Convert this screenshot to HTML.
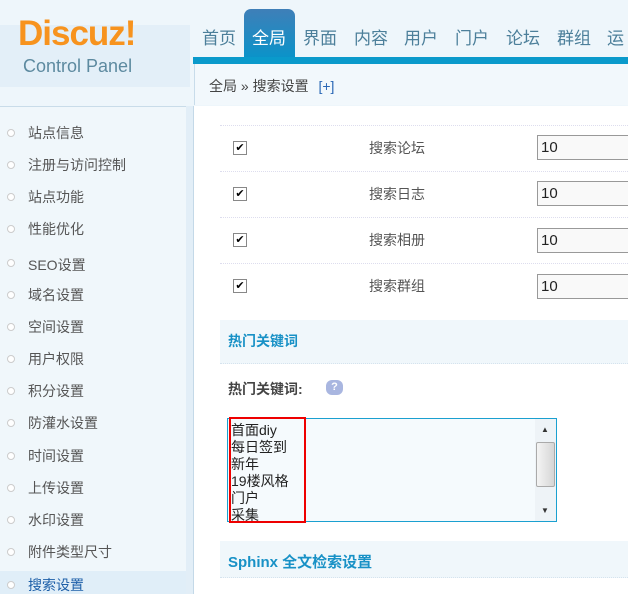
<!DOCTYPE html>
<html><head><meta charset="utf-8"><style>
*{margin:0;padding:0;box-sizing:border-box}
body{width:628px;height:594px;overflow:hidden;position:relative;background:#fff;font-family:"Liberation Sans","Noto Sans CJK SC",sans-serif;font-size:14px;color:#555}
.abs{position:absolute}
#hd{left:0;top:0;width:628px;height:106px;background:#eef6fb}
#logoband{left:0;top:25px;width:190px;height:62px;background:#e3eff8}
#logo1{left:18px;top:14px;font:bold 35px "Liberation Sans",sans-serif;color:#f7931e;letter-spacing:-1px}
#logo2{left:23px;top:56px;font-size:18px;color:#5d8aa0}
.nav{top:24px;font-size:17px;color:#4c7f9a}
#tab{left:244px;top:9px;width:51px;height:49px;background:linear-gradient(#3f7fb8,#0a93c9);border-radius:7px 7px 0 0}
#bar{left:193px;top:57px;width:435px;height:7px;background:#0a9acb}
#crumb{left:194px;top:64px;width:434px;height:41px;background:#f2f8fc;border-left:1px solid #c8dcea}
#side{left:0;top:106px;width:186px;height:488px;background:#f0f7fb;border-top:1px solid #c9dce9}
#sideb{left:186px;top:106px;width:8px;height:488px;background:#e2eef7;border-right:1px solid #c4d9e8}
.mi{left:28px;font-size:14px;color:#555}
.dot{left:7px;width:8px;height:8px;border:1px solid #ccc;border-radius:50%;background:#fff}
.cb{left:233px;width:14px;height:14px;border:1px solid #888;background:#fff;font-size:11px;line-height:12px;text-align:center;color:#000}
.lb{left:369px;font-size:14px;color:#555}
.in{left:537px;width:100px;height:25px;border:1px solid #999;background:#f9f9f9;font-size:15px;padding:3px 0 0 3px;color:#222}
.sep{left:220px;width:408px;border-top:1px dotted #dde}
.sec{left:220px;width:408px;background:#f0f7fb;border-bottom:1px dotted #d5e3ee;color:#1891c6;font-weight:bold;font-size:14px;padding-left:8px}
</style></head><body>
<div id="hd" class="abs"></div>
<div id="logoband" class="abs"></div>
<div id="logo1" class="abs">Discuz!</div>
<div id="logo2" class="abs">Control Panel</div>
<div id="tab" class="abs"></div>
<div class="abs nav" style="left:202px">首页</div>
<div class="abs nav" style="left:252px;color:#fff">全局</div>
<div class="abs nav" style="left:303px">界面</div>
<div class="abs nav" style="left:354px">内容</div>
<div class="abs nav" style="left:404px">用户</div>
<div class="abs nav" style="left:455px">门户</div>
<div class="abs nav" style="left:506px">论坛</div>
<div class="abs nav" style="left:557px">群组</div>
<div class="abs nav" style="left:607px">运</div>
<div id="bar" class="abs"></div>
<div id="crumb" class="abs"><span class="abs" style="left:14px;top:12px;font-size:14px;color:#444">全局 » 搜索设置 <span style="color:#2a67b5;margin-left:6px">[+]</span></span></div>
<div id="side" class="abs"></div>
<div id="sideb" class="abs"></div>
<div class="abs" style="left:0;top:571px;width:186px;height:23px;background:#e0eef8"></div>

<div class="abs dot" style="top:129px"></div><div class="abs mi" style="top:123px">站点信息</div>
<div class="abs dot" style="top:161px"></div><div class="abs mi" style="top:155px">注册与访问控制</div>
<div class="abs dot" style="top:193px"></div><div class="abs mi" style="top:187px">站点功能</div>
<div class="abs dot" style="top:225px"></div><div class="abs mi" style="top:219px">性能优化</div>
<div class="abs dot" style="top:259px"></div><div class="abs mi" style="top:255px">SEO设置</div>
<div class="abs dot" style="top:291px"></div><div class="abs mi" style="top:285px">域名设置</div>
<div class="abs dot" style="top:323px"></div><div class="abs mi" style="top:317px">空间设置</div>
<div class="abs dot" style="top:355px"></div><div class="abs mi" style="top:349px">用户权限</div>
<div class="abs dot" style="top:387px"></div><div class="abs mi" style="top:381px">积分设置</div>
<div class="abs dot" style="top:419px"></div><div class="abs mi" style="top:413px">防灌水设置</div>
<div class="abs dot" style="top:452px"></div><div class="abs mi" style="top:446px">时间设置</div>
<div class="abs dot" style="top:484px"></div><div class="abs mi" style="top:478px">上传设置</div>
<div class="abs dot" style="top:516px"></div><div class="abs mi" style="top:510px">水印设置</div>
<div class="abs dot" style="top:548px"></div><div class="abs mi" style="top:542px">附件类型尺寸</div>
<div class="abs dot" style="top:581px"></div><div class="abs mi" style="top:575px;color:#1d5fa8">搜索设置</div>

<div class="abs sep" style="top:125px"></div>
<div class="abs cb" style="top:141px">✔</div><div class="abs lb" style="top:138px">搜索论坛</div><div class="abs in" style="top:135px">10</div>
<div class="abs sep" style="top:171px"></div>
<div class="abs cb" style="top:187px">✔</div><div class="abs lb" style="top:184px">搜索日志</div><div class="abs in" style="top:181px">10</div>
<div class="abs sep" style="top:217px"></div>
<div class="abs cb" style="top:233px">✔</div><div class="abs lb" style="top:230px">搜索相册</div><div class="abs in" style="top:228px">10</div>
<div class="abs sep" style="top:263px"></div>
<div class="abs cb" style="top:279px">✔</div><div class="abs lb" style="top:276px">搜索群组</div><div class="abs in" style="top:274px">10</div>

<div class="abs sec" style="top:320px;height:44px;line-height:42px">热门关键词</div>
<div class="abs" style="left:228px;top:379px;font-weight:bold;color:#444">热门关键词:</div>
<div class="abs" style="left:326px;top:380px;width:17px;height:15px;border-radius:6px;background:#a9b6e0;color:#fff;font-size:11px;font-weight:bold;text-align:center;line-height:15px">?</div>
<div class="abs" style="left:227px;top:418px;width:330px;height:104px;border:1px solid #1aa0d0;background:#f5fafd"></div>
<div class="abs" style="left:231px;top:422px;font-size:14px;line-height:17px;color:#222;height:99px;overflow:hidden">首面diy<br>每日签到<br>新年<br>19楼风格<br>门户<br>采集</div>
<div class="abs" style="left:229px;top:417px;width:77px;height:106px;border:2px solid #e00"></div>
<div class="abs" style="left:535px;top:419px;width:21px;height:102px;background:#eef3f7"></div>
<div class="abs" style="left:541px;top:425px;font-size:8px;color:#333">▲</div>
<div class="abs" style="left:536px;top:442px;width:19px;height:45px;background:linear-gradient(90deg,#f4f4f4,#d6d6d6);border:1px solid #aaa;border-radius:2px"></div>
<div class="abs" style="left:541px;top:506px;font-size:8px;color:#333">▼</div>

<div class="abs sec" style="top:541px;height:37px;line-height:44px;font-size:15px">Sphinx 全文检索设置</div>
</body></html>
